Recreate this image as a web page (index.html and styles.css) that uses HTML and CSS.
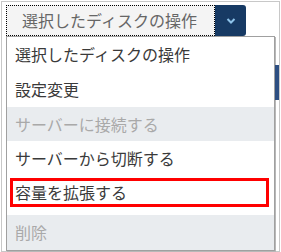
FILE: index.html
```html
<!DOCTYPE html>
<html lang="ja">
<head>
    <meta charset="UTF-8">
    <title>ディスクの操作</title>
    <link rel="stylesheet" href="styles.css">
</head>
<body>

<div class="frame">
    <div class="menu-column">
        <div class="select-row">
            <div class="select-value">選択したディスクの操作</div>
            <button class="select-toggle">
                <svg width="12" height="8" viewBox="0 0 12 8"><path d="M2.5 2 L6 5.5 L9.5 2" fill="none" stroke="#8ec3ea" stroke-width="2"/></svg>
            </button>
        </div>
        <ul class="options">
            <li class="option">選択したディスクの操作</li>
            <li class="option">設定変更</li>
            <li class="option disabled short">サーバーに接続する</li>
            <li class="option">サーバーから切断する</li>
            <li class="option marked"><span class="mark">容量を拡張する</span></li>
            <li class="option disabled">削除</li>
        </ul>
    </div>
    <div class="page-edge">
        <div class="edge-bar"></div>
    </div>
</div>

</body>
</html>
```

FILE: styles.css
```css
body {
    margin: 0;
    font-family: "Noto Sans CJK JP", "Noto Sans", sans-serif;
    font-size: 16px;
    color: #3a3a3a;
    background: #ffffff;
}

.frame {
    margin: 1px 0 0 1px;
    width: 279px;
    height: 251px;
    box-sizing: border-box;
    border: 1px solid #c8c8c8;
    display: grid;
    grid-template-columns: 273px 1fr;
}

.menu-column {
    padding: 3px 0 0 4px;
}

.select-row {
    display: flex;
    width: 240px;
    height: 31px;
}
.select-value {
    width: 209px;
    box-sizing: border-box;
    border: 1px dotted #000000;
    background: #f4f4f4;
    color: #666666;
    padding: 3px 0 0 15px;
    line-height: 22px;
    white-space: nowrap;
}
.select-toggle {
    width: 31px;
    border: 0;
    border-radius: 0 3px 3px 0;
    background: #173a64;
    display: flex;
    align-items: center;
    justify-content: center;
    padding: 0;
}

.options {
    list-style: none;
    margin: 0;
    padding: 0;
    width: 269px;
    box-sizing: border-box;
    border: 1px solid #a0a0a0;
    box-shadow: 1px 1px 0 #b8b8b8;
    background: #ffffff;
}
.option {
    height: 35px;
    padding-left: 8px;
    line-height: 35px;
    white-space: nowrap;
}
.option.short {
    height: 34px;
    line-height: 34px;
}
.option.disabled {
    background: #e9ecef;
    color: #a9a9a9;
}
.option.marked {
    height: 34px;
    padding: 2px 5px 3px 3px;
    line-height: 23px;
}
.mark {
    display: block;
    height: 29px;
    box-sizing: border-box;
    border: 3px solid #ff0000;
    padding-left: 2px;
}

.page-edge {
    padding-top: 63px;
}
.edge-bar {
    width: 4px;
    height: 35px;
    background: #2d4f82;
}
```
